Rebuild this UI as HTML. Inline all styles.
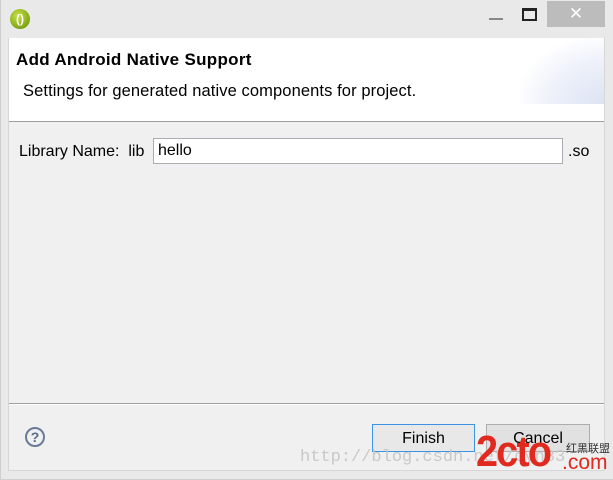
<!DOCTYPE html>
<html><head><style>
body{margin:0;width:613px;height:480px;background:#e9e9e9;position:relative;overflow:hidden;font-family:"Liberation Sans","DejaVu Sans",sans-serif;}
.a{position:absolute;white-space:nowrap}
</style></head><body>
<div class="a" style="left:0;top:0;width:612px;height:479px;border:1px solid #cfcfcf;border-top:none"></div>
<div class="a" style="left:10px;top:9px;width:20px;height:20px;border-radius:50%;background:radial-gradient(circle at 40% 35%,#c8e24a,#7fa512 70%,#5b7a08);"></div>
<div class="a" style="left:13px;top:9px;width:14px;height:20px;color:#fff;font-size:12px;font-weight:bold;text-align:center;line-height:20px">()</div>
<div class="a" style="left:489px;top:18px;width:14px;height:2px;background:#888"></div>
<div class="a" style="left:522px;top:8px;width:11px;height:8px;border:2px solid #222;border-top-width:3px"></div>
<div class="a" style="left:547px;top:1px;width:58px;height:26px;background:#bcbcbc;color:#fff;font-size:17px;font-weight:bold;text-align:center;line-height:26px">✕</div>
<div class="a" style="left:8px;top:38px;width:597px;height:433px;background:#f0f0f0;border:1px solid #d6d6d6;box-sizing:border-box"></div>
<div class="a" style="left:9px;top:38px;width:595px;height:83px;background:#fff;border-bottom:1px solid #a0a0a0"></div>
<div class="a" style="left:520px;top:38px;width:84px;height:66px;background:radial-gradient(ellipse at 100% 100%,#dde3f3 0%,#eef1fa 45%,#fff 75%)"></div>
<div class="a" style="left:16px;top:50px;font-size:17px;font-weight:bold;color:#000;letter-spacing:0.3px">Add Android Native Support</div>
<div class="a" style="left:23px;top:82px;font-size:16.5px;color:#000;letter-spacing:0.1px">Settings for generated native components for project.</div>
<div class="a" style="left:19px;top:143px;font-size:16px;color:#000">Library Name:&nbsp; lib</div>
<div class="a" style="left:153px;top:138px;width:410px;height:26px;background:#fff;border:1px solid #abadb3;box-sizing:border-box;font-size:16px;padding:3px 0 0 4px">hello</div>
<div class="a" style="left:568px;top:143px;font-size:16px">.so</div>
<div class="a" style="left:9px;top:403px;width:595px;height:1px;background:#a0a0a0"></div>
<div class="a" style="left:9px;top:404px;width:595px;height:1px;background:#fff"></div>
<div class="a" style="left:25px;top:427px;width:16px;height:16px;border:2px solid #6b7a99;border-radius:50%;color:#5a6a88;font-size:14px;font-weight:bold;text-align:center;line-height:17px">?</div>
<div class="a" style="left:372px;top:424px;width:103px;height:28px;border:1px solid #3c93e3;background:#e8e8e8;box-sizing:border-box;font-size:16px;text-align:center;line-height:27px">Finish</div>
<div class="a" style="left:486px;top:424px;width:104px;height:28px;border:1px solid #adadad;background:#e1e1e1;box-sizing:border-box;font-size:16px;text-align:center;line-height:27px">Cancel</div>
<div class="a" style="left:300px;top:448px;font-family:'Liberation Mono',monospace;font-size:17px;color:#c8c8c8">http://blog.csdn.net/cyn83</div>
<div class="a" style="left:476px;top:430px;font-size:44px;font-weight:bold;color:#e02a1f;letter-spacing:-2px;line-height:44px;transform:scaleX(0.9);transform-origin:left">2cto</div>
<div class="a" style="left:562px;top:452px;font-size:21px;color:#e02a1f;line-height:21px">.com</div>
<div class="a" style="left:566px;top:442px;font-size:11px;color:#333;font-family:'Noto Sans CJK SC',sans-serif;line-height:13px">红黑联盟</div>
</body></html>
